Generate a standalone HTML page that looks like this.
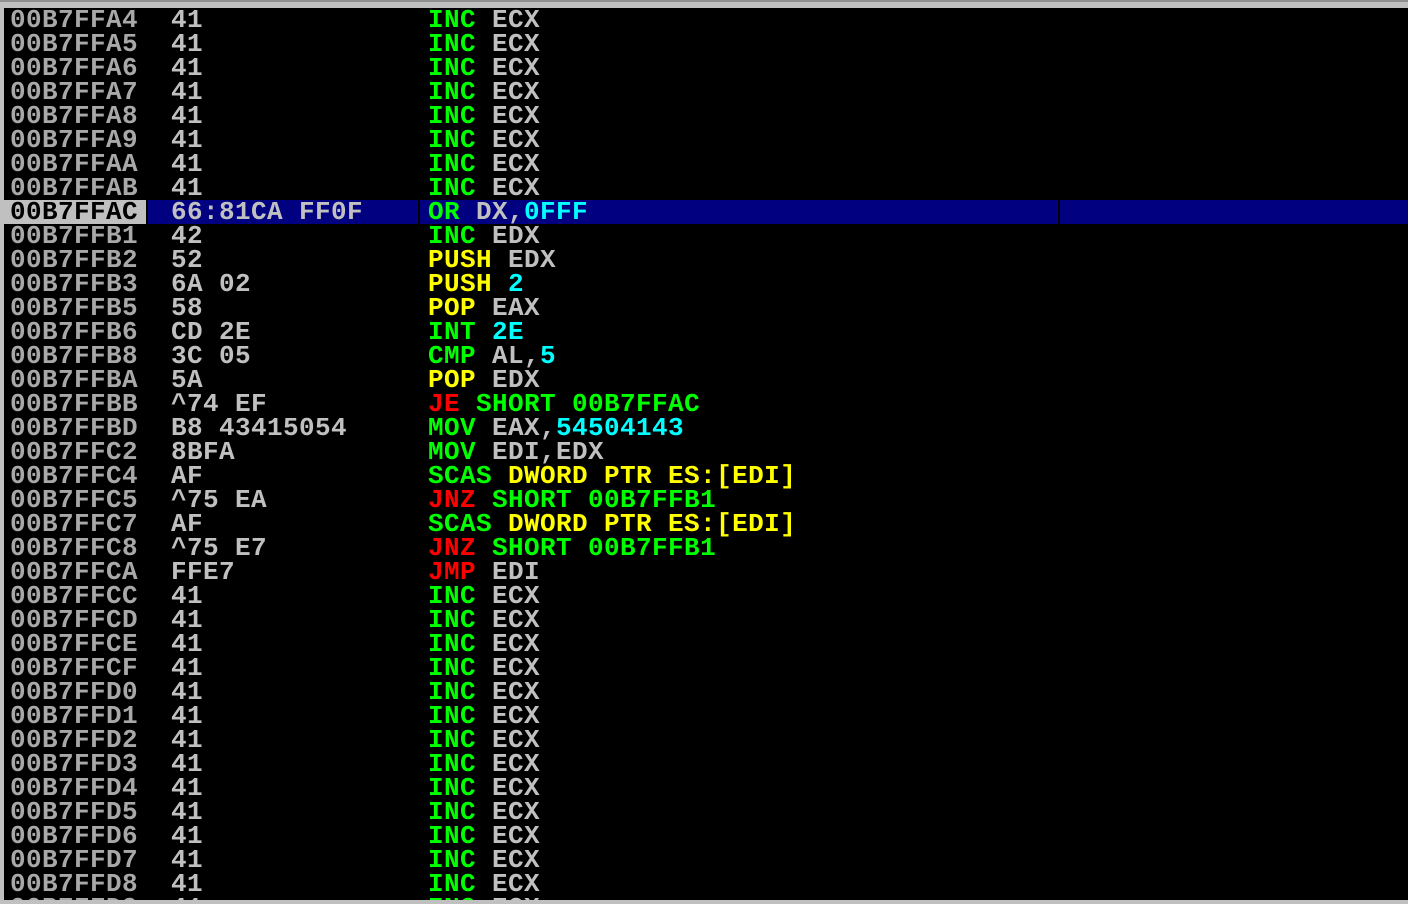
<!DOCTYPE html><html><head><style>
body{margin:0;width:1408px;height:904px;background:#c0c0c0;overflow:hidden;position:relative}
#top{position:absolute;left:0;top:0;width:1408px;height:2px;background:#909090}
#pane{position:absolute;left:4px;top:8px;width:1404px;height:892px;background:#000;overflow:hidden}
.r{position:absolute;left:0;height:24px;width:1404px;font:bold 26px/24px "Liberation Mono",monospace;letter-spacing:0.4px;white-space:pre;color:#c0c0c0}
.r span{position:absolute;top:0}
.a{left:6px;color:#a8a8a8}.h{left:167px}.d{left:424px}
.g{color:#00ff00}.y{color:#ffff00}.rd{color:#ff0000}.c{color:#00ffff}
.sel .ab{position:absolute;left:0;top:0;width:142px;height:24px;background:#c0c0c0}
.sel .b1{position:absolute;left:144px;top:0;width:270px;height:24px;background:#000080}
.sel .b2{position:absolute;left:416px;top:0;width:638px;height:24px;background:#000080}
.sel .b3{position:absolute;left:1056px;top:0;width:348px;height:24px;background:#000080}
.sel .a{color:#000}
</style></head><body><div id="top"></div><div id="pane">
<div class="r" style="top:0"><span class="a">00B7FFA4</span><span class="h">41</span><span class="d"><b class="g">INC</b> ECX</span></div>
<div class="r" style="top:24px"><span class="a">00B7FFA5</span><span class="h">41</span><span class="d"><b class="g">INC</b> ECX</span></div>
<div class="r" style="top:48px"><span class="a">00B7FFA6</span><span class="h">41</span><span class="d"><b class="g">INC</b> ECX</span></div>
<div class="r" style="top:72px"><span class="a">00B7FFA7</span><span class="h">41</span><span class="d"><b class="g">INC</b> ECX</span></div>
<div class="r" style="top:96px"><span class="a">00B7FFA8</span><span class="h">41</span><span class="d"><b class="g">INC</b> ECX</span></div>
<div class="r" style="top:120px"><span class="a">00B7FFA9</span><span class="h">41</span><span class="d"><b class="g">INC</b> ECX</span></div>
<div class="r" style="top:144px"><span class="a">00B7FFAA</span><span class="h">41</span><span class="d"><b class="g">INC</b> ECX</span></div>
<div class="r" style="top:168px"><span class="a">00B7FFAB</span><span class="h">41</span><span class="d"><b class="g">INC</b> ECX</span></div>
<div class="r sel" style="top:192px"><i class="ab"></i><i class="b1"></i><i class="b2"></i><i class="b3"></i><span class="a">00B7FFAC</span><span class="h">66:81CA FF0F</span><span class="d"><b class="g">OR</b> DX,<b class="c">0FFF</b></span></div>
<div class="r" style="top:216px"><span class="a">00B7FFB1</span><span class="h">42</span><span class="d"><b class="g">INC</b> EDX</span></div>
<div class="r" style="top:240px"><span class="a">00B7FFB2</span><span class="h">52</span><span class="d"><b class="y">PUSH</b> EDX</span></div>
<div class="r" style="top:264px"><span class="a">00B7FFB3</span><span class="h">6A 02</span><span class="d"><b class="y">PUSH</b> <b class="c">2</b></span></div>
<div class="r" style="top:288px"><span class="a">00B7FFB5</span><span class="h">58</span><span class="d"><b class="y">POP</b> EAX</span></div>
<div class="r" style="top:312px"><span class="a">00B7FFB6</span><span class="h">CD 2E</span><span class="d"><b class="g">INT</b> <b class="c">2E</b></span></div>
<div class="r" style="top:336px"><span class="a">00B7FFB8</span><span class="h">3C 05</span><span class="d"><b class="g">CMP</b> AL,<b class="c">5</b></span></div>
<div class="r" style="top:360px"><span class="a">00B7FFBA</span><span class="h">5A</span><span class="d"><b class="y">POP</b> EDX</span></div>
<div class="r" style="top:384px"><span class="a">00B7FFBB</span><span class="h">^74 EF</span><span class="d"><b class="rd">JE</b> <b class="g">SHORT 00B7FFAC</b></span></div>
<div class="r" style="top:408px"><span class="a">00B7FFBD</span><span class="h">B8 43415054</span><span class="d"><b class="g">MOV</b> EAX,<b class="c">54504143</b></span></div>
<div class="r" style="top:432px"><span class="a">00B7FFC2</span><span class="h">8BFA</span><span class="d"><b class="g">MOV</b> EDI,EDX</span></div>
<div class="r" style="top:456px"><span class="a">00B7FFC4</span><span class="h">AF</span><span class="d"><b class="g">SCAS</b> <b class="y">DWORD PTR ES:[EDI]</b></span></div>
<div class="r" style="top:480px"><span class="a">00B7FFC5</span><span class="h">^75 EA</span><span class="d"><b class="rd">JNZ</b> <b class="g">SHORT 00B7FFB1</b></span></div>
<div class="r" style="top:504px"><span class="a">00B7FFC7</span><span class="h">AF</span><span class="d"><b class="g">SCAS</b> <b class="y">DWORD PTR ES:[EDI]</b></span></div>
<div class="r" style="top:528px"><span class="a">00B7FFC8</span><span class="h">^75 E7</span><span class="d"><b class="rd">JNZ</b> <b class="g">SHORT 00B7FFB1</b></span></div>
<div class="r" style="top:552px"><span class="a">00B7FFCA</span><span class="h">FFE7</span><span class="d"><b class="rd">JMP</b> EDI</span></div>
<div class="r" style="top:576px"><span class="a">00B7FFCC</span><span class="h">41</span><span class="d"><b class="g">INC</b> ECX</span></div>
<div class="r" style="top:600px"><span class="a">00B7FFCD</span><span class="h">41</span><span class="d"><b class="g">INC</b> ECX</span></div>
<div class="r" style="top:624px"><span class="a">00B7FFCE</span><span class="h">41</span><span class="d"><b class="g">INC</b> ECX</span></div>
<div class="r" style="top:648px"><span class="a">00B7FFCF</span><span class="h">41</span><span class="d"><b class="g">INC</b> ECX</span></div>
<div class="r" style="top:672px"><span class="a">00B7FFD0</span><span class="h">41</span><span class="d"><b class="g">INC</b> ECX</span></div>
<div class="r" style="top:696px"><span class="a">00B7FFD1</span><span class="h">41</span><span class="d"><b class="g">INC</b> ECX</span></div>
<div class="r" style="top:720px"><span class="a">00B7FFD2</span><span class="h">41</span><span class="d"><b class="g">INC</b> ECX</span></div>
<div class="r" style="top:744px"><span class="a">00B7FFD3</span><span class="h">41</span><span class="d"><b class="g">INC</b> ECX</span></div>
<div class="r" style="top:768px"><span class="a">00B7FFD4</span><span class="h">41</span><span class="d"><b class="g">INC</b> ECX</span></div>
<div class="r" style="top:792px"><span class="a">00B7FFD5</span><span class="h">41</span><span class="d"><b class="g">INC</b> ECX</span></div>
<div class="r" style="top:816px"><span class="a">00B7FFD6</span><span class="h">41</span><span class="d"><b class="g">INC</b> ECX</span></div>
<div class="r" style="top:840px"><span class="a">00B7FFD7</span><span class="h">41</span><span class="d"><b class="g">INC</b> ECX</span></div>
<div class="r" style="top:864px"><span class="a">00B7FFD8</span><span class="h">41</span><span class="d"><b class="g">INC</b> ECX</span></div>
<div class="r" style="top:888px"><span class="a">00B7FFD9</span><span class="h">41</span><span class="d"><b class="g">INC</b> ECX</span></div>
</div></body></html>
